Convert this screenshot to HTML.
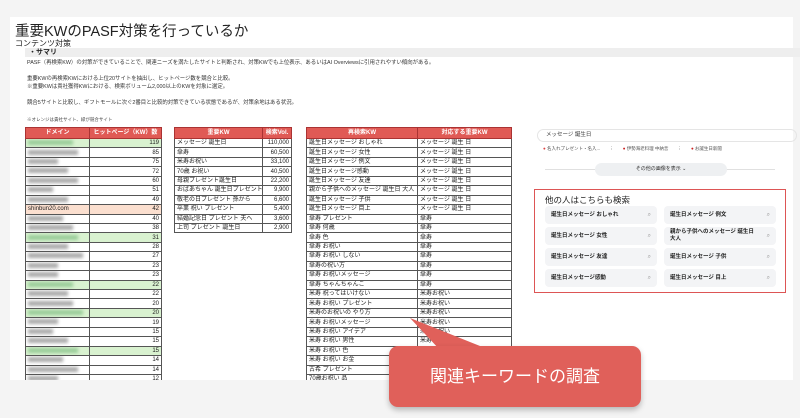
<!DOCTYPE html>
<html><head><meta charset="utf-8"><style>
*{margin:0;padding:0;box-sizing:border-box}
body{width:800px;height:418px;background:#f4f4f4;font-family:"Liberation Sans","Noto Sans CJK JP",sans-serif;position:relative;overflow:hidden;color:#222}
.page{position:absolute;left:10px;top:17px;width:783px;height:363px;background:#fff}
.a{position:absolute}
table{border-collapse:collapse;position:absolute;font-size:6px;table-layout:fixed}
td,th{border:1px solid #555;height:9.45px;line-height:8px;padding:0 2px;white-space:nowrap;overflow:hidden}
th{background:#e05a55;color:#fff;height:11px;font-weight:bold;border-color:#a33}
.r{text-align:right}
.g{background:#d9f2d0}.o{background:#fbdfcf}
.bl{display:inline-block;height:5px;background:#aaa;filter:blur(1.5px);vertical-align:middle}
.chip{position:absolute;width:112px;height:18px;background:#f3f4f6;border-radius:4px;font-size:5.5px;line-height:7px;font-weight:bold;padding:0 6px;display:flex;align-items:center;justify-content:space-between}
.chip i{font-style:normal;color:#999;font-weight:normal;font-size:6px}
</style></head><body>
<div class="page"></div>
<div class="a" style="left:15px;top:24px;font-size:14.5px;line-height:16px">重要KWのPASF対策を行っているか</div>
<div class="a" style="left:15px;top:39px;font-size:8px;line-height:9px">コンテンツ対策</div>
<div class="a" style="left:25px;top:48px;width:775px;height:9px;background:#eee;font-size:7px;font-weight:bold;padding-left:4px;line-height:9px">・サマリ</div>
<div class="a" style="left:27px;top:59px;font-size:5.4px;line-height:8px;color:#333">PASF（再検索KW）の対策ができていることで、関連ニーズを満たしたサイトと判断され、対策KWでも上位表示、あるいはAI Overviewsに引用されやすい傾向がある。<br><br>重要KWの再検索KWにおける上位20サイトを抽出し、ヒットページ数を競合と比較。<br>※重要KWは貴社獲得KWにおける、検索ボリューム2,000以上のKWを対象に選定。<br><br>競合5サイトと比較し、ギフトモールに次ぐ2番目と比較的対策できている状態であるが、対策余地はある状況。</div>
<div class="a" style="left:27px;top:117px;font-size:4.5px;line-height:5px;color:#444">※オレンジは貴社サイト、緑が競合サイト</div>

<table style="left:25px;top:127px;width:136px"><col style="width:64px"><col style="width:72px">
<tr><th>ドメイン</th><th>ヒットページ（KW）数</th></tr>
<tr class="g"><td><span class="bl" style="width:45px;background:#9c9"></span></td><td class="r">119</td></tr>
<tr><td><span class="bl" style="width:50px"></span></td><td class="r">85</td></tr>
<tr><td><span class="bl" style="width:30px"></span></td><td class="r">75</td></tr>
<tr><td><span class="bl" style="width:40px"></span></td><td class="r">72</td></tr>
<tr><td><span class="bl" style="width:50px"></span></td><td class="r">60</td></tr>
<tr><td><span class="bl" style="width:25px"></span></td><td class="r">51</td></tr>
<tr><td><span class="bl" style="width:40px"></span></td><td class="r">49</td></tr>
<tr class="o"><td>shinbun20.com</td><td class="r">42</td></tr>
<tr><td><span class="bl" style="width:35px"></span></td><td class="r">40</td></tr>
<tr><td><span class="bl" style="width:45px"></span></td><td class="r">38</td></tr>
<tr class="g"><td><span class="bl" style="width:50px;background:#9c9"></span></td><td class="r">31</td></tr>
<tr><td><span class="bl" style="width:40px"></span></td><td class="r">28</td></tr>
<tr><td><span class="bl" style="width:55px"></span></td><td class="r">27</td></tr>
<tr><td><span class="bl" style="width:30px"></span></td><td class="r">23</td></tr>
<tr><td><span class="bl" style="width:30px"></span></td><td class="r">23</td></tr>
<tr class="g"><td><span class="bl" style="width:45px;background:#9c9"></span></td><td class="r">22</td></tr>
<tr><td><span class="bl" style="width:40px"></span></td><td class="r">22</td></tr>
<tr><td><span class="bl" style="width:45px"></span></td><td class="r">20</td></tr>
<tr class="g"><td><span class="bl" style="width:55px;background:#9c9"></span></td><td class="r">20</td></tr>
<tr><td><span class="bl" style="width:30px"></span></td><td class="r">19</td></tr>
<tr><td><span class="bl" style="width:25px"></span></td><td class="r">15</td></tr>
<tr><td><span class="bl" style="width:40px"></span></td><td class="r">15</td></tr>
<tr class="g"><td><span class="bl" style="width:50px;background:#9c9"></span></td><td class="r">15</td></tr>
<tr><td><span class="bl" style="width:35px"></span></td><td class="r">14</td></tr>
<tr><td><span class="bl" style="width:50px"></span></td><td class="r">14</td></tr>
<tr><td><span class="bl" style="width:30px"></span></td><td class="r">12</td></tr>
</table>

<table style="left:174px;top:127px;width:117px"><col style="width:88px"><col style="width:29px">
<tr><th>重要KW</th><th>検索Vol.</th></tr>
<tr><td>メッセージ 誕生日</td><td class="r">110,000</td></tr>
<tr><td>傘寿</td><td class="r">60,500</td></tr>
<tr><td>米寿お祝い</td><td class="r">33,100</td></tr>
<tr><td>70歳 お祝い</td><td class="r">40,500</td></tr>
<tr><td>母親プレゼント誕生日</td><td class="r">22,200</td></tr>
<tr><td>おばあちゃん 誕生日プレゼント</td><td class="r">9,900</td></tr>
<tr><td>敬老の日プレゼント 孫から</td><td class="r">6,600</td></tr>
<tr><td>卒業 祝い プレゼント</td><td class="r">5,400</td></tr>
<tr><td>結婚記念日 プレゼント 夫へ</td><td class="r">3,600</td></tr>
<tr><td>上司 プレゼント 誕生日</td><td class="r">2,900</td></tr>
</table>

<table style="left:306px;top:127px;width:205px"><col style="width:111px"><col style="width:94px">
<tr><th>再検索KW</th><th>対応する重要KW</th></tr>
<tr><td>誕生日メッセージ おしゃれ</td><td>メッセージ 誕生 日</td></tr>
<tr><td>誕生日メッセージ 女性</td><td>メッセージ 誕生 日</td></tr>
<tr><td>誕生日メッセージ 例文</td><td>メッセージ 誕生 日</td></tr>
<tr><td>誕生日メッセージ感動</td><td>メッセージ 誕生 日</td></tr>
<tr><td>誕生日メッセージ 友達</td><td>メッセージ 誕生 日</td></tr>
<tr><td>親から子供へのメッセージ 誕生日 大人</td><td>メッセージ 誕生 日</td></tr>
<tr><td>誕生日メッセージ 子供</td><td>メッセージ 誕生 日</td></tr>
<tr><td>誕生日メッセージ 目上</td><td>メッセージ 誕生 日</td></tr>
<tr><td>傘寿 プレゼント</td><td>傘寿</td></tr>
<tr><td>傘寿 何歳</td><td>傘寿</td></tr>
<tr><td>傘寿 色</td><td>傘寿</td></tr>
<tr><td>傘寿 お祝い</td><td>傘寿</td></tr>
<tr><td>傘寿 お祝い しない</td><td>傘寿</td></tr>
<tr><td>傘寿の祝い方</td><td>傘寿</td></tr>
<tr><td>傘寿 お祝いメッセージ</td><td>傘寿</td></tr>
<tr><td>傘寿 ちゃんちゃんこ</td><td>傘寿</td></tr>
<tr><td>米寿 祝ってはいけない</td><td>米寿お祝い</td></tr>
<tr><td>米寿 お祝い プレゼント</td><td>米寿お祝い</td></tr>
<tr><td>米寿のお祝いの やり方</td><td>米寿お祝い</td></tr>
<tr><td>米寿 お祝いメッセージ</td><td>米寿お祝い</td></tr>
<tr><td>米寿 お祝い アイデア</td><td>米寿お祝い</td></tr>
<tr><td>米寿 お祝い 男性</td><td>米寿お祝い</td></tr>
<tr><td>米寿 お祝い 色</td><td>米寿お祝い</td></tr>
<tr><td>米寿 お祝い お金</td><td>米寿お祝い</td></tr>
<tr><td>古希 プレゼント</td><td>古希</td></tr>
<tr><td>70歳お祝い 品</td><td>古希</td></tr>
</table>

<div class="a" style="left:0;top:380px;width:800px;height:38px;background:#f4f4f4"></div>

<div class="a" style="left:537px;top:129px;width:260px;height:13px;border:1px solid #e5e5e5;border-radius:7px;font-size:5.5px;line-height:11px;padding-left:8px;color:#333">メッセージ 誕生日</div>
<div class="a" style="left:543px;top:146px;font-size:4.5px;line-height:6px;color:#555;white-space:nowrap"><span style="color:#d44">●</span> 名入れプレゼント・名入...　　⋮　　<span style="color:#c22">●</span> 伊勢海老料理 中納言　　⋮　　<span style="color:#c22">●</span> お誕生日新聞</div>
<div class="a" style="left:545px;top:169px;width:230px;height:1px;background:#e0e0e0"></div>
<div class="a" style="left:595px;top:163px;width:132px;height:13px;background:#eef0f2;border-radius:7px;font-size:5px;line-height:13px;text-align:center;color:#333">その他の画像を表示 ⌄</div>

<div class="a" style="left:534px;top:189px;width:252px;height:104px;border:1.5px solid #d55;background:#fff"></div>
<div class="a" style="left:545px;top:195px;font-size:8.5px;line-height:10px;color:#222">他の人はこちらも検索</div>
<div class="chip" style="left:545px;top:206px">誕生日メッセージ おしゃれ<i>⌕</i></div>
<div class="chip" style="left:664px;top:206px">誕生日メッセージ 例文<i>⌕</i></div>
<div class="chip" style="left:545px;top:227px">誕生日メッセージ 女性<i>⌕</i></div>
<div class="chip" style="left:664px;top:227px"><span>親から子供へのメッセージ 誕生日<br>大人</span><i>⌕</i></div>
<div class="chip" style="left:545px;top:248px">誕生日メッセージ 友達<i>⌕</i></div>
<div class="chip" style="left:664px;top:248px">誕生日メッセージ 子供<i>⌕</i></div>
<div class="chip" style="left:545px;top:269px">誕生日メッセージ感動<i>⌕</i></div>
<div class="chip" style="left:664px;top:269px">誕生日メッセージ 目上<i>⌕</i></div>

<svg class="a" style="left:380px;top:310px" width="120" height="50"><polygon points="30,8 60,40 110,40" fill="#e0605a"/></svg>
<div class="a" style="left:389px;top:346px;width:252px;height:61px;background:#e0605a;border-radius:9px;box-shadow:0 3px 6px rgba(0,0,0,.25);color:#fff;font-size:17px;line-height:61px;text-align:center">関連キーワードの調査</div>
</body></html>
